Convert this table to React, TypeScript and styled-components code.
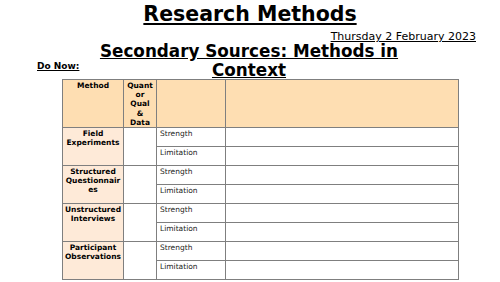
import React from 'react';
import styled, { createGlobalStyle } from 'styled-components';

const GlobalStyle = createGlobalStyle`
    html, body {
        margin: 0;
        padding: 0;
        background: #ffffff;
    }
    body {
        font-family: 'DejaVu Sans', 'Liberation Sans', sans-serif;
        color: #000000;
    }
`;

interface MethodRow {
    name: string;
    darkTop?: boolean;
}

const methods: MethodRow[] = [
    { name: 'Field Experiments' },
    { name: 'Structured Questionnaires' },
    { name: 'Unstructured Interviews' },
    { name: 'Participant Observations', darkTop: true },
];

const colWidths = [61, 33, 69, 233];

const Slide = styled.div`
    width: 500px;
    height: 282px;
    overflow: hidden;
    display: flex;
    flex-direction: column;
`;

const Title = styled.h1`
    margin: 0;
    padding-top: 2px;
    text-align: center;
    font-size: 20.5px;
    line-height: 25px;
    font-weight: bold;
    text-decoration: underline;
    text-decoration-thickness: 2px;
    text-underline-offset: 2px;
`;

const DateLine = styled.div`
    margin-top: 3px;
    padding-right: 24px;
    text-align: right;
    font-size: 11px;
    line-height: 13px;
    text-decoration: underline;
`;

const HeadingRow = styled.div`
    display: grid;
    grid-template-columns: 94px 310px 1fr;
    margin-top: -1px;
`;

const DoNow = styled.div`
    align-self: end;
    padding-left: 37px;
    padding-bottom: 8px;
    font-size: 9px;
    line-height: 11px;
    font-weight: bold;
    text-decoration: underline;
`;

const Subtitle = styled.h2`
    margin: 0;
    text-align: center;
    font-size: 16.8px;
    line-height: 19px;
    font-weight: bold;
    text-decoration: underline;
    text-underline-offset: 1px;
`;

const Grid = styled.table`
    margin-left: 62px;
    margin-top: -1px;
    border-collapse: collapse;
    table-layout: fixed;
    width: 396px;
    font-size: 7.5px;
`;

const Col = styled.col<{ w: number }>`
    width: ${(p) => p.w}px;
`;

const HeadRow = styled.tr`
    height: 47px;
`;

const HeadCell = styled.th`
    padding: 1px 0 0;
    background: #fedeb2;
    border: 1px solid #7f7f7f;
    vertical-align: top;
    text-align: center;
    font-weight: bold;
    line-height: 9.2px;
`;

const BodyRow = styled.tr<{ dark?: boolean }>`
    height: 19px;

    & > td {
        border-top-color: ${(p) => (p.dark ? '#000000' : '#7f7f7f')};
    }
`;

const MethodCell = styled.td`
    background: #feead8;
    border: 1px solid #7f7f7f;
    padding: 1px 1px 0;
    vertical-align: top;
    text-align: center;
    font-weight: bold;
    line-height: 9px;
    overflow-wrap: anywhere;
`;

const BlankCell = styled.td`
    border: 1px solid #7f7f7f;
    padding: 0;
`;

const LabelCell = styled.td`
    border: 1px solid #7f7f7f;
    padding: 1px 3px 0;
    vertical-align: top;
    color: #222222;
    line-height: 9px;
`;

export default function App() {
    return (
        <Slide>
            <GlobalStyle />
            <Title>Research Methods</Title>
            <DateLine>Thursday 2 February 2023</DateLine>
            <HeadingRow>
                <DoNow>Do Now:</DoNow>
                <Subtitle>Secondary Sources: Methods in Context</Subtitle>
            </HeadingRow>
            <Grid>
                <colgroup>
                    {colWidths.map((w, i) => (
                        <Col key={i} w={w} />
                    ))}
                </colgroup>
                <thead>
                    <HeadRow>
                        <HeadCell>Method</HeadCell>
                        <HeadCell>
                            Quant
                            <br />
                            or
                            <br />
                            Qual
                            <br />
                            &amp;
                            <br />
                            Data
                        </HeadCell>
                        <HeadCell />
                        <HeadCell />
                    </HeadRow>
                </thead>
                <tbody>
                    {methods.map((m) => (
                        <React.Fragment key={m.name}>
                            <BodyRow dark={m.darkTop}>
                                <MethodCell rowSpan={2}>{m.name}</MethodCell>
                                <BlankCell rowSpan={2} />
                                <LabelCell>Strength</LabelCell>
                                <BlankCell />
                            </BodyRow>
                            <BodyRow>
                                <LabelCell>Limitation</LabelCell>
                                <BlankCell />
                            </BodyRow>
                        </React.Fragment>
                    ))}
                </tbody>
            </Grid>
        </Slide>
    );
}
